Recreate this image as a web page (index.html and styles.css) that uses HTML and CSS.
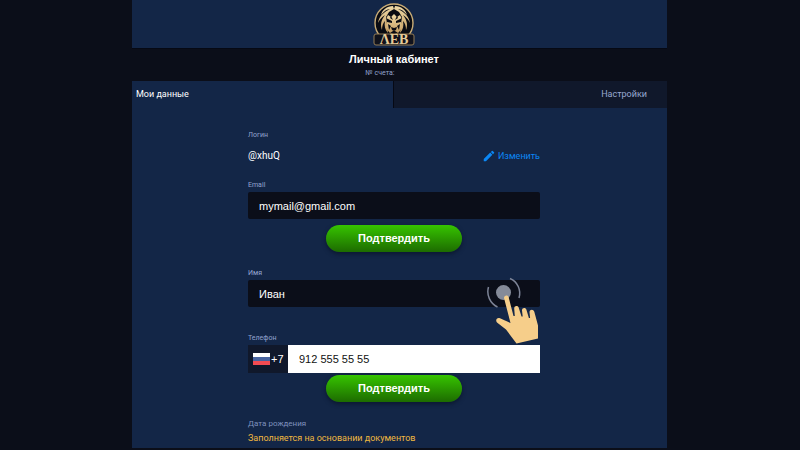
FILE: index.html
```html
<!DOCTYPE html>
<html lang="ru">
<head>
<meta charset="utf-8">
<title>Личный кабинет</title>
<link rel="stylesheet" href="styles.css">
</head>
<body>
<div class="page">
  <header class="header">
    <svg class="logo" viewBox="0 0 44 44" role="img" aria-label="ЛЕВ">
      <defs>
        <linearGradient id="gold" x1="0" y1="0" x2="0" y2="1">
          <stop offset="0" stop-color="#eed9a6"/>
          <stop offset="1" stop-color="#c39a5e"/>
        </linearGradient>
      </defs>
      <circle cx="22" cy="21" r="19" fill="#090b12" stroke="#c9ac76" stroke-width="1.4"/>
      <g fill="url(#gold)">
        <path d="M21 4c-6 0-11 4-12 9 3-4 6-6 9-6-6 3-11 7-12 14 2-4 4-6 7-8-4 5-5 10-3 15 0-4 1-7 3-9-1 5 0 9 3 12l-1-9-1-7 3-5 5-3z"/>
        <path d="M23 4c6 0 11 4 12 9-3-4-6-6-9-6 6 3 11 7 12 14-2-4-4-6-7-8 4 5 5 10 3 15 0-4-1-7-3-9 1 5 0 9-3 12l1-9 1-7-3-5-5-3z"/>
        <path d="M16 13l3 2 3-3 3 3 3-2 2 4-1 4 1 5-3 4-2 2h-6l-2-2-3-4 1-5-1-4z"/>
      </g>
      <g fill="#090b12">
        <path d="M14 16l6 3v2l-5-1zM30 16l-6 3v2l5-1zM19 25l3 1 3-1-1 3-2 1-2-1zM18 31l3-2h2l3 2-4 1z"/>
        <path d="M19 14l2 4-3-2zM25 14l-2 4 3-2zM16 22l3 2-2 4zM28 22l-3 2 2 4z"/>
      </g>
      <rect x="2" y="32" width="40" height="11" rx="2" fill="#10121c" stroke="#927a54" stroke-width="1"/>
      <text class="logo-text" x="22" y="42" text-anchor="middle" fill="#e6cb98">ΛЕВ</text>
    </svg>
  </header>
  <div class="heading">
    <h1>Личный кабинет</h1>
    <p class="account">№ счета:</p>
  </div>
  <nav class="tabs">
    <a class="tab active" href="#data">Мои данные</a>
    <a class="tab settings" href="#settings">Настройки</a>
  </nav>
  <main class="panel" id="data">
    <form class="form">
      <section class="login">
        <p class="label">Логин</p>
        <div class="login-row">
          <span class="username">@xhuQ</span>
          <a class="edit" href="#edit">
            <svg class="pencil" viewBox="0 0 24 24" aria-hidden="true"><path fill="currentColor" d="M3 17.200V21h3.800L17.800 9.900 14.100 6.200zM20.700 7a1 1 0 0 0 0-1.400l-2.300-2.300a1 1 0 0 0-1.400 0l-1.800 1.800 3.700 3.700z"/></svg>
            Изменить
          </a>
        </div>
      </section>
      <section class="field email">
        <label class="label" for="email">Email</label>
        <input class="input" id="email" type="text" value="mymail@gmail.com">
        <button class="confirm" type="button">Подтвердить</button>
      </section>
      <section class="field name">
        <label class="label" for="name">Имя</label>
        <div class="pointer-host">
          <input class="input" id="name" type="text" value="Иван">
          <svg class="pointer" viewBox="0 0 54 68" aria-hidden="true">
            <g fill="none" stroke="#7d8497" stroke-width="1.500">
              <path d="M2.500 10A17 17 0 0 0 11.500 30"/>
              <path d="M24 1.500A16 16 0 0 1 33 21"/>
            </g>
            <circle cx="17.500" cy="15.500" r="7.500" fill="#858b99"/>
            <path fill="#f6ce8a" d="M18 21c0-3 4-3.500 4.700-.5L27.500 39h1.300l-.6-7.500c0-3 4-3.200 4.600-.5l2.700 8.500h1.200l-.7-6c0-3 3.800-3.200 4.500-.5l2.400 8h1.200l-.6-6c.3-3 4-3 4.800-.2L52 48.500v13L30.500 66.500 20 52.500l-9-7c-2-2 0-5.500 3-4.200L24.500 46z"/>
          </svg>
        </div>
      </section>
      <section class="field phone">
        <label class="label" for="phone">Телефон</label>
        <div class="phone-row">
          <span class="prefix">
            <svg class="flag" viewBox="0 0 17 12" aria-hidden="true"><path fill="#fff" d="M0 0h17v4H0z"/><path fill="#47639f" d="M0 4h17v4H0z"/><path fill="#f34b52" d="M0 8h17v4H0z"/></svg>+7
          </span>
          <input class="input number" id="phone" type="tel" value="912 555 55 55">
        </div>
        <button class="confirm" type="button">Подтвердить</button>
      </section>
      <section class="birth">
        <p class="birth-title">Дата рождения</p>
        <p class="birth-note">Заполняется на основании документов</p>
      </section>
    </form>
  </main>
</div>
</body>
</html>
```
FILE: styles.css
```css
* {
  box-sizing: border-box;
}

body {
  margin: 0;
  background: #0b0e19;
  color: #fff;
  font: 9px/12px Roboto, "Liberation Sans", sans-serif;
}

h1,
p {
  margin: 0;
}

a {
  color: inherit;
  text-decoration: none;
}

.page {
  margin: 0 133px 0 132px;
  padding-bottom: 2px;
}

.header {
  display: flex;
  justify-content: center;
  padding: 2px 11px 2px 0;
  background: #132647;
  border-bottom: 1px solid #060914;
}

.logo {
  width: 44px;
  height: 44px;
}

.logo-text {
  font: bold 14px "Liberation Serif", serif;
}

.heading {
  padding: 3px 11px 3px 0;
  text-align: center;
}

h1 {
  font: bold 11px/14px "Liberation Sans", Arial, sans-serif;
}

.account {
  padding: 2px 28px 0 0;
  color: #93a4cf;
  font-size: 7px;
  line-height: 10px;
}

.tabs {
  display: grid;
  grid-template-columns: 261fr 274fr;
}

.tab {
  padding: 6px 4px 7px;
  line-height: 14px;
}

.tab.active {
  background: #132647;
}

.tab.settings {
  padding-right: 20px;
  border-left: 1px solid #060914;
  background: #10182b;
  color: #98a9d1;
  text-align: right;
}

.panel {
  padding: 22px 127px 3px 116px;
  background: #132647;
}

.label {
  display: block;
  color: #93a4cf;
  font-size: 7px;
  line-height: 10px;
}

.login-row {
  display: flex;
  align-items: center;
  justify-content: space-between;
  padding: 9px 0 17px;
}

.username {
  font-size: 10px;
}

.edit {
  display: flex;
  align-items: center;
  gap: 2px;
  color: #0b87f5;
}

.pencil {
  width: 14px;
  height: 14px;
}

.field {
  display: flex;
  flex-direction: column;
}

.input {
  width: 100%;
  height: 27px;
  margin: 0;
  padding: 0 11px;
  border: 0;
  border-radius: 2px;
  background: #0b0e19;
  color: #fff;
  font: 11px "Liberation Sans", Arial, sans-serif;
}

.email .input,
.name .input {
  margin-top: 2px;
}

.confirm {
  align-self: center;
  width: 136px;
  height: 27px;
  padding: 0 0 2px;
  border: 0;
  border-radius: 14px;
  background: linear-gradient(#36c400, #1d6b00);
  box-shadow: 0 2px 4px #0b1730;
  color: #fff;
  font: bold 11px "Liberation Sans", Arial, sans-serif;
}

.email .confirm {
  margin-top: 6px;
}

.name {
  margin-top: 16px;
}

.pointer-host {
  position: relative;
}

.pointer {
  position: absolute;
  top: -1px;
  right: 0;
  width: 54px;
  height: 68px;
}

.phone {
  margin-top: 26px;
}

.phone-row {
  display: flex;
  margin-top: 2px;
}

.prefix {
  display: flex;
  flex: none;
  align-items: center;
  gap: 1px;
  width: 40px;
  padding-left: 5px;
  background: #10182b;
  font-family: "Liberation Sans", Arial, sans-serif;
  font-size: 11px;
}

.flag {
  width: 17px;
  height: 12px;
}

.number {
  height: 28px;
  border-radius: 0;
  background: #fff;
  color: #111;
}

.phone .confirm {
  margin-top: 2px;
}

.birth {
  padding-top: 15px;
  line-height: 14px;
}

.birth-title {
  color: #7f91bd;
  font-size: 8px;
}

.birth-note {
  color: #f0b840;
}
```
